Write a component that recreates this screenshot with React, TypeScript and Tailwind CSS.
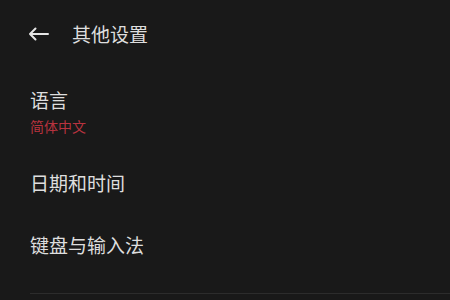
export default function App() {
  return (
    <div
      className="h-[300px] w-[450px] overflow-hidden bg-[#191919] text-[#dedede]"
      style={{ fontFamily: '"Noto Sans CJK SC", "Noto Sans", sans-serif' }}
    >
      <header className="mt-[22px] flex h-6 items-center pl-[28px]">
        <svg width="21" height="14" viewBox="0 0 21 14" fill="none" stroke="#e6e6e6" strokeWidth="2" strokeLinecap="round" strokeLinejoin="round">
          <path d="M20 7H2M7.5 1.5L2 7l5.5 5.5" />
        </svg>
        <h1 className="ml-[23px] text-[19px] leading-6">其他设置</h1>
      </header>

      <div className="pl-[30px]">
        <div className="pt-[42px]">
          <p className="text-[19px] leading-6">语言</p>
          <p className="mt-1 text-[14px] leading-5 text-[#b8333f]">简体中文</p>
        </div>
        <div className="pt-[35px]">
          <p className="text-[19px] leading-6">日期和时间</p>
        </div>
        <div className="pt-[38px]">
          <p className="text-[19px] leading-6">键盘与输入法</p>
        </div>
        <div className="mt-[36px] h-px bg-[#2c2c2c]" />
      </div>
    </div>
  );
}
